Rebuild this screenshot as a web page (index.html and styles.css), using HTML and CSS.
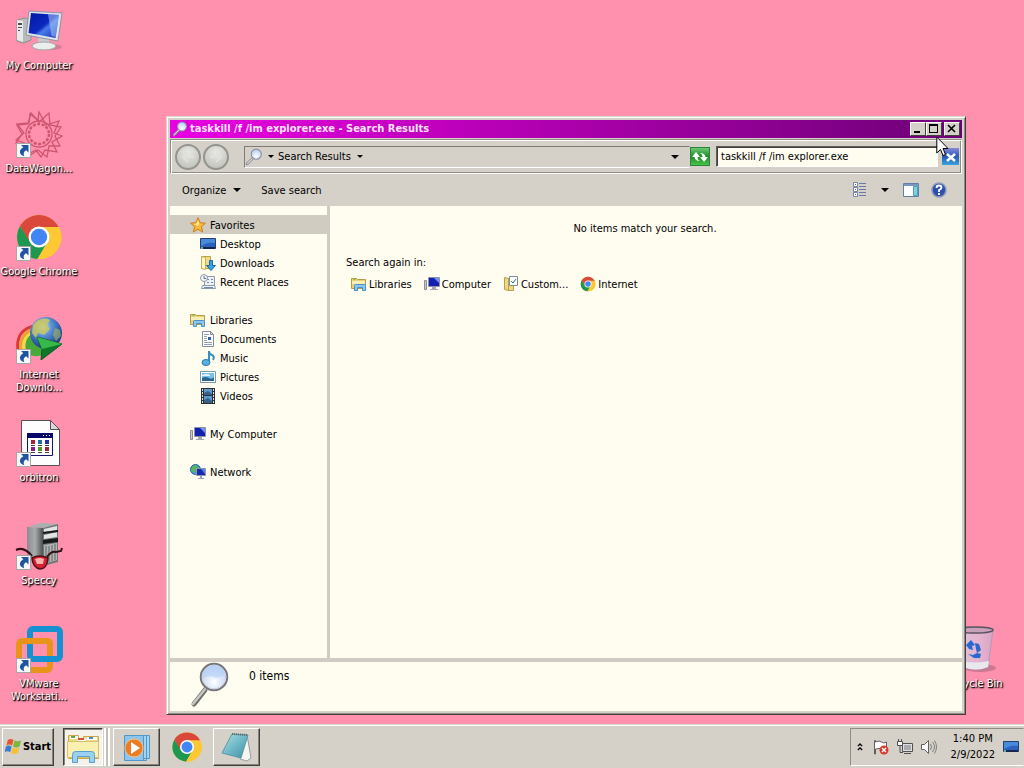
FILE: index.html
```html
<!DOCTYPE html>
<html lang="en">
<head>
    <meta charset="UTF-8">
    <meta name="viewport" content="width=device-width, initial-scale=1.0">
    <title>Search Results</title>
    <link rel="stylesheet" href="styles.css">
</head>
<body>

    <!-- shared icons -->
    <svg class="sprite" aria-hidden="true">
        <defs>
            <linearGradient id="screenBlue" x1="0" y1="0" x2="1" y2="1">
                <stop offset="0" stop-color="#0418a0"/>
                <stop offset=".5" stop-color="#0c28c0"/>
                <stop offset=".6" stop-color="#4a7ce8"/>
                <stop offset="1" stop-color="#0a28b8"/>
            </linearGradient>
            <linearGradient id="metal" x1="0" y1="0" x2="1" y2="0">
                <stop offset="0" stop-color="#888c8e"/>
                <stop offset=".5" stop-color="#a8acac"/>
                <stop offset="1" stop-color="#4c5052"/>
            </linearGradient>
            <linearGradient id="notepad" x1="0" y1="0" x2="1" y2="1">
                <stop offset="0" stop-color="#b4dfe4"/>
                <stop offset=".5" stop-color="#6fb9c6"/>
                <stop offset="1" stop-color="#3b8ea2"/>
            </linearGradient>
            <linearGradient id="binGlass" x1="0" y1="0" x2="1" y2="0">
                <stop offset="0" stop-color="#d9c6dc"/>
                <stop offset=".6" stop-color="#e6b4cf"/>
                <stop offset="1" stop-color="#d8a4c4"/>
            </linearGradient>
            <radialGradient id="globe" cx=".4" cy=".3" r=".7">
                <stop offset="0" stop-color="#cfe4f4"/>
                <stop offset=".4" stop-color="#5a92d8"/>
                <stop offset="1" stop-color="#173a80"/>
            </radialGradient>
            <radialGradient id="lens" cx=".5" cy=".7" r=".6">
                <stop offset="0" stop-color="#fff"/>
                <stop offset="1" stop-color="#bcd0f4"/>
            </radialGradient>
        </defs>

        <symbol id="i-shortcut" viewBox="0 0 15 15">
            <path fill="#f8f8f8" stroke="#a8a4a8" d="M.5.5h14v14H.5z"/>
            <path fill="#1f55a0" d="M5 2h7.500v7.500L10.200 7.300C7.800 8.500 7 10.500 8.300 13.200 3.500 12 2 7.500 7.300 4.300z"/>
        </symbol>

        <symbol id="i-chrome" viewBox="0 0 48 48">
            <circle cx="24" cy="24" r="22" fill="#fcc934"/>
            <path fill="#d9483b" d="M5 13a22 22 0 0 1 38 0l1 2H24L13.500 28z"/>
            <path fill="#1e9850" d="M5 13A22 22 0 0 0 22.500 46L33 28.500 15 29z"/>
            <path fill="#fcc934" d="M24 14h20a22 22 0 0 1-21.500 32L33 28z"/>
            <circle cx="24" cy="24" r="10.500" fill="#fff"/>
            <circle cx="24" cy="24" r="8.200" fill="#4285f4"/>
        </symbol>

        <symbol id="i-computer" viewBox="0 0 48 48">
            <ellipse cx="36" cy="40" rx="11" ry="3" fill="#b06a80" opacity=".5"/>
            <path fill="#b8bcbc" stroke="#8a9090" d="M2 13l8-2 6 2v20l-8 3-6-2z"/>
            <path fill="#e6eaea" d="M2 13l6 1v21l-6-2z"/>
            <path fill="#4a5050" d="M3 16h4v2H3zM3 20h4v1H3zM3 23h2v1H3z"/>
            <path fill="#c8cccc" d="M23 30l11 2 1 6H24z"/>
            <ellipse cx="29" cy="39" rx="12" ry="4" fill="#eceeee" stroke="#a0a4a4"/>
            <path fill="#dfe3ea" stroke="#8c94a4" d="M14 4l33 2-4 28-32-6z"/>
            <path fill="url(#screenBlue)" d="M16 6l28 2-3.500 23L13.500 26z"/>
            <path fill="#a9c8fa" opacity=".55" d="M33 7l11 1-3.500 22-4-1z"/>
        </symbol>

        <symbol id="i-pc" viewBox="0 0 16 16">
            <path fill="#c8ccd2" stroke="#8a8e98" d="M.5 4.500h2v9h-2z"/>
            <path fill="#d8d8e4" stroke="#9090a4" d="M4.500 1.500h11v9h-11z"/>
            <path fill="#1420b0" d="M5 2h10v8H5z"/>
            <path fill="#6c94f0" d="M10 2h5v5z"/>
            <path fill="#a8a8b4" d="M8 11h4v2h2v1H6v-1h2z"/>
        </symbol>

        <symbol id="i-lib" viewBox="0 0 16 16">
            <path fill="#e8d27a" stroke="#b99c40" d="M.5 12.500v-10h5l1 1h8v9z"/>
            <path fill="#f8efb8" d="M1 5h13v3H1z"/>
            <path fill="#9bc45c" d="M2 3h3v1H2z"/>
            <path fill="#8cc8ee" stroke="#4a90c8" d="M3.500 14.500v-5q0-1 1-1h9q1 0 1 1v5h-3v-3h-5v3z"/>
        </symbol>

        <symbol id="i-lens" viewBox="0 0 16 16">
            <path stroke="#8a8a94" stroke-width="2.500" stroke-linecap="round" d="M2 14l5-5"/>
            <path stroke="#d8d8de" d="M2 14l5-5"/>
            <circle cx="10" cy="5.500" r="4.500" fill="url(#lens)" stroke="#8c90a4"/>
        </symbol>

        <symbol id="i-desktop" viewBox="0 0 16 16">
            <path fill="#2b62c0" stroke="#26406c" d="M.5 2.500h15v10H.5z"/>
            <path fill="#4a8adc" d="M1 3h14v4Q8 5 1 10z"/>
            <path fill="#16264c" d="M1 11h14v2H1z"/>
            <path fill="#58b0a0" d="M1 11h2v2H1z"/>
        </symbol>
    </svg>

    <main class="desktop">

        <div class="icons">
            <a class="shortcut" href="#">
                <svg viewBox="0 0 48 48"><use href="#i-computer"/></svg>
                <span>My Computer</span>
            </a>
            <a class="shortcut" href="#">
                <svg viewBox="0 0 48 48">
                    <g fill="none" stroke="#cf5670" stroke-width="1.300">
                        <path d="M24 2l7 13 13-4-5 12 8 3-10 6 5 10-12-2-4 7-5-7-8 4-1-10-11-4 8-7-7-9 12-1 1-9 8 6z"/>
                        <path d="M16 3l8 9 10-9 1 12 11 2-6 9 5 10-11 0-2 11-9-7-9 6-2-11-11-2 6-9-5-9 11-1z"/>
                        <circle cx="24" cy="24" r="13"/>
                        <circle cx="24" cy="24" r="10" stroke-width="2.500" stroke-dasharray="3 1.500"/>
                    </g>
                    <use href="#i-shortcut" x="1" y="33" width="15" height="15"/>
                </svg>
                <span>DataWagon...</span>
            </a>
            <a class="shortcut" href="#">
                <svg viewBox="0 0 48 48">
                    <use href="#i-chrome" width="48" height="48"/>
                    <use href="#i-shortcut" x="1" y="33" width="15" height="15"/>
                </svg>
                <span>Google Chrome</span>
            </a>
            <a class="shortcut" href="#">
                <svg viewBox="0 0 48 48">
                    <g fill="none" stroke-width="3">
                        <path stroke="#d83a34" d="M20 10C8 12 1 20 3 34"/>
                        <path stroke="#f0a030" d="M20 13C10 15 4 23 6 36"/>
                        <path stroke="#e8e040" d="M20 16C12 18 7 25 9 36"/>
                    </g>
                    <path fill="#48a838" d="M19 17c-8 3-10 11-7 20 7 5 15 4 21-2l-9-7z"/>
                    <circle cx="31" cy="17" r="16" fill="url(#globe)"/>
                    <path fill="#c9c860" d="M18 9c4-6 12-8 17-5l-3 5 3 4-6 6-6-2-2 5-4-5z" opacity=".85"/>
                    <path fill="#a9b860" d="M40 12l5 2 1 6-5 5-3-6z" opacity=".6"/>
                    <path fill="#0c7828" stroke="#0a5c20" d="M22 21l25 7-21 16 1-11z"/>
                    <path fill="#38b848" d="M22 21l25 7-20 5z"/>
                    <use href="#i-shortcut" x="1" y="33" width="15" height="15"/>
                </svg>
                <span>Internet Downlo...</span>
            </a>
            <a class="shortcut" href="#">
                <svg viewBox="0 0 48 48">
                    <path fill="#fdfdfd" stroke="#5c4c54" d="M6.500 1.500h29l9 9v36h-38z"/>
                    <path fill="#d8d8d8" stroke="#5c4c54" d="M35.500 1.500v9h9z"/>
                    <path fill="#fff" stroke="#14146c" d="M12.500 14.500h25v22h-25z"/>
                    <path fill="#08086c" d="M12 14h26v5H12z"/>
                    <path fill="#fff" d="M28 16h1v1h-1zM31 16h1v1h-1zM34 16h1v1h-1z"/>
                    <path fill="#a82038" d="M16 21h4v4h-4zM30 28h4v4h-4z"/>
                    <path fill="#2070a8" d="M23 21h4v4h-4z"/>
                    <path fill="#2030b0" d="M30 21h4v4h-4z"/>
                    <path fill="#802090" d="M16 28h4v4h-4z"/>
                    <path fill="#509828" d="M23 28h4v4h-4z"/>
                    <path fill="#404040" d="M16 26h4v1h-4zM23 26h4v1h-4zM30 26h4v1h-4zM16 33h4v1h-4zM23 33h4v1h-4zM30 33h4v1h-4z"/>
                    <use href="#i-shortcut" x="1" y="33" width="15" height="15"/>
                </svg>
                <span>orbitron</span>
            </a>
            <a class="shortcut" href="#">
                <svg viewBox="0 0 48 48">
                    <path fill="#a8b0b0" d="M12 5l14-4 17 1-15 4z"/>
                    <path fill="url(#metal)" d="M12 5l16 1v38l-16-6z"/>
                    <path fill="#707877" d="M28 6l15-4v38l-15 4z"/>
                    <path fill="#e0e4e4" d="M29 7l13-3v4l-13 2zM29 13l13-3v5l-13 2z"/>
                    <path fill="#181a1a" d="M28 10l15-2v2l-15 2zM28 18l15-2v4l-15 2z"/>
                    <path fill="#b0b4b4" d="M29 23l13-2v17l-13 4z"/>
                    <path stroke="#606464" d="M31 24v17M34 24v16M37 23v16M40 22v16"/>
                    <path fill="none" stroke="#301014" stroke-width="2" d="M1 28q8-4 16 6M32 35q4-6 9-5l5-1 1-3"/>
                    <path fill="#d82030" stroke="#501018" stroke-width="1.500" d="M17 36q7-4 16 0-1 11-8 11-7-1-8-11z"/>
                    <path fill="#ffb0b0" d="M20 37q5-2 9 0l-1 5h-6z"/>
                    <use href="#i-shortcut" x="1" y="33" width="15" height="15"/>
                </svg>
                <span>Speccy</span>
            </a>
            <a class="shortcut" href="#">
                <svg viewBox="0 0 48 48">
                    <g fill="none" stroke-width="6">
                        <rect x="4" y="16" width="31" height="29" rx="3" stroke="#e8941a"/>
                        <rect x="15" y="4" width="30" height="30" rx="3" stroke="#1590d0"/>
                        <path stroke="#e8941a" d="M10 16h22q3 0 3 3v6"/>
                    </g>
                    <use href="#i-shortcut" x="1" y="33" width="15" height="15"/>
                </svg>
                <span>VMware Workstati...</span>
            </a>
        </div>

        <a class="shortcut recycle" href="#">
            <svg viewBox="0 0 48 48">
                <ellipse cx="30" cy="43" rx="16" ry="4" fill="#a86880" opacity=".6"/>
                <path fill="url(#binGlass)" stroke="#b498b4" d="M7 5h36l-5 37q-12 5-25 0z"/>
                <path fill="#e8e8ee" d="M11 36q14 3 28 0l-1 6q-12 5-25 0z"/>
                <ellipse cx="25" cy="5" rx="18" ry="3" fill="#c8a0b8" stroke="#585464" stroke-width="1.500"/>
                <path fill="#2868d0" d="M16 20l5-5 4 5-3 1 1 4-4-1zM25 18l4 1 2 6-4 3-1-4zM18 29l6 4h6l1-4-4-1-4 2z"/>
            </svg>
            <span>Recycle Bin</span>
        </a>

        <section class="window">
            <header class="titlebar">
                <svg class="icon16"><use href="#i-lens"/></svg>
                <h1>taskkill /f /im explorer.exe - Search Results</h1>
                <button class="tb" aria-label="Minimize"><svg viewBox="0 0 12 10"><path fill="#000" d="M2 7h6v2H2z"/></svg></button>
                <button class="tb" aria-label="Maximize"><svg viewBox="0 0 12 10"><path fill="#000" fill-rule="evenodd" d="M1 0h9v9H1zM2 2v6h7V2z"/></svg></button>
                <button class="tb close" aria-label="Close"><svg viewBox="0 0 12 10"><path stroke="#000" stroke-width="1.600" d="M2 1l7 7M9 1L2 8"/></svg></button>
            </header>

            <div class="addressbar">
                <button class="nav-btn" aria-label="Back"><svg viewBox="0 0 16 16"><path d="M14 8H3M8 3L3 8l5 5"/></svg></button>
                <button class="nav-btn" aria-label="Forward"><svg viewBox="0 0 16 16"><path d="M2 8h11M8 3l5 5-5 5"/></svg></button>
                <div class="crumbs">
                    <svg class="icon18"><use href="#i-lens"/></svg>
                    <button class="crumb" aria-label="Locations"><i class="caret"></i></button>
                    <button class="crumb">Search Results <i class="caret"></i></button>
                    <button class="crumb last" aria-label="Previous locations"><i class="caret big"></i></button>
                </div>
                <button class="go" aria-label="Refresh">
                    <svg viewBox="0 0 18 16">
                        <path fill="#fff" d="M1 8l4-5 4 5H6.500q0 3 2.500 4-5 0-5.500-4zM17 8l-4 5-4-5h2.500q0-3-2.500-4 5 0 5.500 4z"/>
                    </svg>
                </button>
                <input class="search" type="text" aria-label="Search" value="taskkill /f /im explorer.exe">
                <button class="clear" aria-label="Clear search">
                    <svg viewBox="0 0 16 16"><path stroke="#fff" stroke-width="2.500" d="M4 5l8 7M12 5l-8 7"/></svg>
                </button>
            </div>

            <div class="commandbar">
                <button class="cmd organize">Organize <i class="caret big"></i></button>
                <button class="cmd">Save search</button>
                <span class="spacer"></span>
                <button class="cmd" aria-label="Change view">
                    <svg class="icon16" viewBox="0 0 16 16">
                        <path fill="#fff" stroke="#7c84a4" d="M1.500.5h4v4h-4zM1.500 5.500h4v4h-4zM1.500 10.500h4v4h-4z"/>
                        <path fill="#5060a0" d="M3 2h1v1H3zM3 7h1v1H3zM3 12h1v1H3z"/>
                        <path stroke="#6878a8" d="M7 1.500h7M7 4.500h7M7 7.500h7M7 10.500h7M7 13.500h7"/>
                    </svg>
                </button>
                <button class="cmd views" aria-label="More views"><i class="caret big"></i></button>
                <button class="cmd" aria-label="Preview pane">
                    <svg class="icon16" viewBox="0 0 16 16">
                        <path fill="#fff" stroke="#6080a8" d="M.5 1.500h15v13H.5z"/>
                        <path fill="#7898c0" d="M1 2h14v2H1z"/>
                        <path fill="#80d0dc" stroke="#50a0b8" d="M10.500 4.500h4v9h-4z"/>
                    </svg>
                </button>
                <button class="cmd help" aria-label="Help">
                    <svg class="icon16" viewBox="0 0 16 16">
                        <circle cx="8" cy="8" r="7" fill="#2c50b0" stroke="#8c98b8" stroke-width="1.500"/>
                        <path fill="none" stroke="#fff" stroke-width="1.800" d="M5.500 6q0-2.500 2.500-2.500t2.500 2Q10.500 7 8 8v2"/>
                        <path fill="#fff" d="M7 11h2v2H7z"/>
                    </svg>
                </button>
            </div>

            <div class="content">
                <nav class="tree">
                    <a class="selected" href="#">
                        <svg class="icon16" viewBox="0 0 16 16"><path fill="#fcb838" stroke="#d07c18" d="M8 .8l2.200 4.900 5.200.5-4 3.500 1.300 5.300L8 12.200 3.300 15l1.300-5.300-4-3.500 5.200-.5z"/><path fill="#ffe89c" d="M8 3l1.300 3.500L8 9 4 7l2.500-.5z"/></svg>
                        <span>Favorites</span>
                    </a>
                    <a class="sub" href="#"><svg class="icon16"><use href="#i-desktop"/></svg><span>Desktop</span></a>
                    <a class="sub" href="#">
                        <svg class="icon16" viewBox="0 0 16 16">
                            <path fill="#f0dc88" stroke="#b8a048" d="M1.500 1.500h9v12h-9z"/>
                            <path fill="#fff6c4" stroke="#c8b058" d="M1.500 1.500l4 1v12l-4-1z"/>
                            <path fill="#38a4e4" stroke="#1868a8" d="M9.500 5.500h3v5h3l-4.500 5-4.500-5h3z"/>
                        </svg>
                        <span>Downloads</span>
                    </a>
                    <a class="sub" href="#">
                        <svg class="icon16" viewBox="0 0 16 16">
                            <path fill="#eef2f8" stroke="#8c98ac" d="M4.500 2.500h10v9h-10zM2.500 11.500h12l1 3h-14z"/>
                            <path stroke="#7088b0" d="M7 5.500h2M11 5.500h2M7 8.500h2M11 8.500h2M4 13.500h9"/>
                            <circle cx="4" cy="4" r="3.500" fill="#f4f6fa" stroke="#909cac"/>
                            <path fill="none" stroke="#607080" d="M4 2v2.500h2"/>
                        </svg>
                        <span>Recent Places</span>
                    </a>

                    <a class="group" href="#"><svg class="icon16"><use href="#i-lib"/></svg><span>Libraries</span></a>
                    <a class="sub" href="#">
                        <svg class="icon16" viewBox="0 0 16 16">
                            <path fill="#fff" stroke="#8490a0" d="M2.500.5h8l3 3v12h-11z"/>
                            <path fill="#dce4ec" stroke="#8490a0" d="M10.500.5v3h3z"/>
                            <path stroke="#98a0b0" d="M4 3.500h5M4 5.500h3M4 7.500h3M4 9.500h3M4 11.500h8M4 13.500h8"/>
                            <path fill="#3060b0" d="M8 6h3v3H8z"/>
                        </svg>
                        <span>Documents</span>
                    </a>
                    <a class="sub" href="#">
                        <svg class="icon16" viewBox="0 0 16 16">
                            <path fill="none" stroke="#3890c0" stroke-width="2" d="M9 13V1q0 3 3 4t1 5"/>
                            <ellipse cx="6" cy="12.500" rx="4" ry="3" fill="#58b0e0" stroke="#2878b0"/>
                        </svg>
                        <span>Music</span>
                    </a>
                    <a class="sub" href="#">
                        <svg class="icon16" viewBox="0 0 16 16">
                            <path fill="#fff" stroke="#7c98ac" d="M.5 2.500h15v11H.5z"/>
                            <path fill="#78c0ec" d="M2 4h12v8H2z"/>
                            <path fill="#e8f4fc" d="M2 6q5-2 8 0v1H2z"/>
                            <path fill="#286890" d="M2 9q4-2 7 0t5-1v4H2z"/>
                        </svg>
                        <span>Pictures</span>
                    </a>
                    <a class="sub" href="#">
                        <svg class="icon16" viewBox="0 0 16 16">
                            <path fill="#283038" d="M1 0h14v16H1z"/>
                            <path fill="#5c9cd0" d="M4 1h8v6H4zM4 8h8v7H4z"/>
                            <path fill="#386088" d="M4 5l4-2 4 3v1H4zM4 12l4-2 4 3v2H4z"/>
                            <path stroke="#e8e4d0" stroke-dasharray="2 1" d="M2.500 1v14M13.500 1v14"/>
                        </svg>
                        <span>Videos</span>
                    </a>

                    <a class="group" href="#"><svg class="icon16"><use href="#i-pc"/></svg><span>My Computer</span></a>
                    <a class="group" href="#">
                        <svg class="icon16" viewBox="0 0 16 16">
                            <circle cx="5.500" cy="5.500" r="5" fill="#4c98d0" stroke="#28609c"/>
                            <path fill="#58b858" d="M2 3l4-2 2 3-3 4-4-1z"/>
                            <path fill="#1828b0" stroke="#8c98b4" d="M6.500 4.500h9v7h-9z"/>
                            <path fill="#5880e8" d="M11 5h4v5z"/>
                            <path fill="#9ca4b0" d="M10 12h2v2h2v1H8v-1h2z"/>
                        </svg>
                        <span>Network</span>
                    </a>
                </nav>

                <div class="results">
                    <p class="empty">No items match your search.</p>
                    <p class="again">Search again in:</p>
                    <div class="places">
                        <a href="#"><svg class="icon16"><use href="#i-lib"/></svg>Libraries</a>
                        <a href="#"><svg class="icon16"><use href="#i-pc"/></svg>Computer</a>
                        <a href="#">
                            <svg class="icon16" viewBox="0 0 16 16">
                                <path fill="#ecd888" stroke="#b8a048" d="M1.500 1.500l4 1v12l-4-1zM5.500 2.500h5v12h-5z"/>
                                <path fill="#fff" stroke="#7c8c9c" d="M6.500.5h8v9h-8z"/>
                                <path fill="none" stroke="#2c80a8" d="M8 5l2 2 3-4"/>
                            </svg>
                            Custom...
                        </a>
                        <a href="#"><svg class="icon16"><use href="#i-chrome"/></svg>Internet</a>
                    </div>
                </div>
            </div>

            <footer class="details">
                <svg viewBox="0 0 48 48">
                    <path stroke="#6c6c68" stroke-width="5" stroke-linecap="round" d="M8 42l11-14"/>
                    <path stroke="#c8c8c0" stroke-width="2.500" stroke-linecap="round" d="M7 42l13-16"/>
                    <circle cx="28" cy="15" r="13" fill="url(#lens)" stroke="#74747c" stroke-width="2.500"/>
                    <circle cx="28" cy="15" r="12" fill="none" stroke="#d4d8e0"/>
                    <path fill="#b4d0f8" d="M17 16q7-3 11-1t10-2q0-10-10-10t-11 13z" opacity=".6"/>
                </svg>
                <span>0 items</span>
            </footer>
        </section>

        <svg class="cursor" viewBox="0 0 13 21"><path fill="#fff" stroke="#000" d="M.8 1v16l3.700-3.500 2.500 6 2.500-1-2.500-6H12z"/></svg>
    </main>

    <footer class="taskbar">
        <button class="start">
            <svg viewBox="0 0 18 18">
                <path fill="#e8542c" d="M3 2q3-2 6 0L7.500 8q-3-2-6 0z"/>
                <path fill="#7cb83c" d="M10 2.500q3 2 7 0L15.500 9q-4 2-7 0z"/>
                <path fill="#3c7cd0" d="M1 9q3-2 6 0L5.500 15q-3-2-6 0z"/>
                <path fill="#f8c030" d="M8 10q3 2 7 0l-1.500 6q-4 2-7 0z"/>
            </svg>
            Start
        </button>
        <div class="tasks">
            <button class="task active" aria-label="Windows Explorer">
                <svg viewBox="0 0 36 36">
                    <path fill="#f0dc84" stroke="#c8a848" d="M3.500 29.500v-23h10v3h5v-2h15v22z"/>
                    <path fill="#fff" d="M5 7h8v3H5zM13 9h8v3h-8zM22 8h10v3H22z"/>
                    <path fill="#60a840" d="M6 7h4v2H6z"/><path fill="#d85030" d="M13 9h6v2h-6z"/><path fill="#4890c0" d="M24 8h4v2h-4z"/>
                    <path fill="#faf0b0" stroke="#d8c068" d="M2.500 12.500h31v16h-31z"/>
                    <path fill="#9cd0f0" stroke="#58a0d0" d="M7.500 33.500v-8q0-3 3-3h16q3 0 3 3v8h-5v-6h-12v6z"/>
                </svg>
            </button>
            <span class="stack"></span>
            <button class="task" aria-label="Windows Media Player">
                <svg viewBox="0 0 36 36">
                    <path fill="#a4d4f0" stroke="#5098c8" d="M14.500 6.500h16v23h-16zM10.500 6.500h17v25h-17z"/>
                    <path fill="#8cc4ec" stroke="#5098c8" d="M5.500 6.500h19v25h-19z"/>
                    <circle cx="15" cy="19" r="9" fill="#ec7c20" stroke="#f8c080"/>
                    <path fill="#fff" d="M12 13l9 6-9 6z"/>
                </svg>
            </button>
            <button class="task flat" aria-label="Google Chrome"><svg><use href="#i-chrome"/></svg></button>
            <button class="task" aria-label="Notepad">
                <svg viewBox="0 0 36 36">
                    <path fill="#f4f4f0" stroke="#989c9c" d="M28 6l4 23-4 3-7-2z"/>
                    <path fill="url(#notepad)" stroke="#5c98a4" d="M13 5l16 1-7 23-19-5z"/>
                    <path fill="none" stroke="#606868" stroke-width="2" stroke-dasharray="1 1" d="M13 5l16 1"/>
                </svg>
            </button>
        </div>

        <div class="tray">
            <button class="tray-btn" aria-label="Show hidden icons"><svg class="chev" viewBox="0 0 7 10"><path fill="none" stroke="#000" stroke-width="1.500" d="M1 4l2.500-2.500L6 4M1 8.500L3.500 6 6 8.500"/></svg></button>
            <button class="tray-btn" aria-label="Action Center">
                <svg class="icon16" viewBox="0 0 16 16">
                    <path fill="#fff" stroke="#606060" d="M1.500 15V1.500h1V3q4-2 6 0t5 0v7q-3 1-5 0t-6 0v5z"/>
                    <circle cx="11" cy="11" r="4.500" fill="#d83830"/>
                    <path stroke="#fff" stroke-width="1.500" d="M9 9l4 4M13 9l-4 4"/>
                </svg>
            </button>
            <button class="tray-btn" aria-label="Network">
                <svg class="icon16" viewBox="0 0 16 16">
                    <path fill="#e0e0e0" stroke="#505050" d="M5.500 4.500h10v8h-10z"/>
                    <path fill="#a8acb0" d="M7 6h7v5H7z"/>
                    <path fill="none" stroke="#505050" d="M7 14.500h7M1.500 0v2M4.500 0v2M3 6v7.500h3"/>
                    <path fill="#fff" stroke="#505050" d="M.5 2.500h5v4h-5z"/>
                </svg>
            </button>
            <button class="tray-btn" aria-label="Volume">
                <svg class="icon16" viewBox="0 0 16 16">
                    <path fill="#fff" stroke="#606060" d="M.5 5.500h3l4-4v13l-4-4h-3z"/>
                    <path fill="none" stroke="#808080" d="M9.500 5q2 3 0 6M11.500 3q4 5 0 10M13.500 1.500q4 6.500 0 13"/>
                </svg>
            </button>
            <time class="clock" datetime="2022-02-09T13:40">1:40 PM<br>2/9/2022</time>
            <button class="tray-btn" aria-label="Show desktop"><svg class="icon16"><use href="#i-desktop"/></svg></button>
        </div>
    </footer>

</body>
</html>
```
FILE: styles.css
```css
* {
    box-sizing: border-box;
}
body {
    margin: 0;
    height: 100vh;
    display: flex;
    flex-direction: column;
    overflow: hidden;
    background-color: #ff91af;
    color: #000;
    font-family: "DejaVu Sans Condensed", "DejaVu Sans", Tahoma, sans-serif;
    font-size: 11px;
    line-height: 13px;
}
a {
    color: inherit;
    text-decoration: none;
}
button {
    margin: 0;
    padding: 0;
    border: 0;
    background: none;
    color: inherit;
    font: inherit;
    display: flex;
    align-items: center;
    justify-content: center;
}
svg {
    display: block;
    flex: none;
}
.sprite {
    position: absolute;
    width: 0;
    height: 0;
}
.icon16 {
    width: 16px;
    height: 16px;
}
.icon18 {
    width: 18px;
    height: 18px;
}
.caret {
    border: 3px solid transparent;
    border-top-color: #000;
    border-bottom: 0;
}
.caret.big {
    border-width: 4px 4px 0;
}
.spacer {
    flex: 1;
}

/* desktop */
.desktop {
    flex: 1;
    min-height: 0;
    position: relative;
}
.icons {
    padding-top: 7px;
    display: grid;
    grid-auto-rows: 103px;
    width: 78px;
}
.shortcut {
    display: flex;
    flex-direction: column;
    align-items: center;
    gap: 4px;
    width: 78px;
    color: #fff;
    text-align: center;
    text-shadow: 1px 1px 2px #000, 1px 1px 1px #000;
}
.shortcut svg {
    width: 48px;
    height: 48px;
}
.shortcut span {
    max-width: 78px;
}
.icons .shortcut:nth-child(4) span,
.icons .shortcut:nth-child(7) span {
    max-width: 64px;
}
.recycle {
    position: absolute;
    right: 11px;
    bottom: 34px;
}

/* search window */
.window {
    position: absolute;
    top: 116px;
    left: 166px;
    right: 58px;
    bottom: 9px;
    padding: 3px;
    display: flex;
    flex-direction: column;
    background-color: #d5d1c9;
    border: 1px solid;
    border-color: #dcd8d0 #404040 #404040 #dcd8d0;
    box-shadow: inset 1px 1px #fff, inset -1px -1px #908c84;
}
.titlebar {
    display: flex;
    align-items: center;
    height: 18px;
    padding: 0 2px;
    background: linear-gradient(to right, #ea00e2, #6d0076);
    color: #ffe4fc;
}
.titlebar h1 {
    flex: 1;
    margin: 0 0 0 2px;
    font-size: 11px;
    line-height: 18px;
}
.tb {
    width: 16px;
    height: 14px;
    background-color: #d5d1c9;
    border: 1px solid;
    border-color: #fff #404040 #404040 #fff;
}
.tb svg {
    width: 12px;
    height: 10px;
}
.tb.close {
    margin-left: 2px;
}
.addressbar {
    display: flex;
    align-items: center;
    height: 35px;
    margin-top: 1px;
    padding: 0 2px 0 4px;
    border: 1px solid;
    border-color: #908c84 #fff #fff #908c84;
    box-shadow: inset 1px 1px #fff, inset -1px -1px #908c84;
}
.nav-btn {
    width: 26px;
    height: 26px;
    margin-right: 2px;
    border: 2px solid #94948f;
    border-radius: 50%;
    background: radial-gradient(circle at 50% 30%, #e8e8e4, #bcbcb6);
}
.nav-btn svg {
    width: 16px;
    height: 16px;
    fill: none;
    stroke: #e0e0dc;
    stroke-width: 2px;
}
.crumbs {
    flex: 1;
    display: flex;
    align-items: center;
    height: 22px;
    margin-left: 13px;
    border: 1px solid;
    border-color: #807c74 transparent #fff #807c74;
}
.crumb {
    gap: 6px;
    margin-left: 4px;
}
.crumb:first-of-type {
    margin-left: 5px;
}
.crumb.last {
    margin-left: auto;
    margin-right: 10px;
}
.go {
    width: 20px;
    height: 19px;
    border: 1px solid #2c8438;
    background: linear-gradient(#6cc874, #1c8c28 50%, #48c448);
}
.go svg {
    width: 18px;
    height: 16px;
}
.search {
    width: 222px;
    height: 21px;
    margin: 0 4px 0 6px;
    padding: 0 4px;
    border: 1px solid;
    border-color: #605c58 #fff #fff #605c58;
    box-shadow: inset 1px 1px #404040;
    background-color: #fffcf0;
    font: inherit;
}
.clear {
    width: 17px;
    height: 17px;
    background: linear-gradient(#8888d8, #2858b8 50%, #38a4dc);
}
.clear svg {
    width: 16px;
    height: 16px;
}
.commandbar {
    display: flex;
    align-items: center;
    height: 32px;
    padding: 0 15px 0 12px;
}
.organize {
    gap: 7px;
    margin-right: 20px;
}
.views {
    margin: 0 14px 0 13px;
}
.help {
    margin-left: 12px;
}

.content {
    flex: 1;
    min-height: 0;
    display: flex;
}
.tree {
    width: 160px;
    padding-top: 9px;
    background-color: #fffcf0;
    border-right: 3px solid #d0ccc4;
}
.tree a {
    display: flex;
    align-items: center;
    gap: 4px;
    height: 19px;
    padding-left: 20px;
}
.tree span {
    padding-top: 2px;
}
.tree .sub {
    padding-left: 30px;
}
.tree .group {
    margin-top: 19px;
}
.tree .selected {
    background-color: #d0ccc2;
}
.results {
    flex: 1;
    padding: 16px 18px 0 16px;
    background-color: #fffcf0;
}
.results p {
    margin: 0;
}
.empty {
    text-align: center;
}
.results .again {
    margin-top: 21px;
}
.places {
    display: flex;
    gap: 12px;
    margin-top: 7px;
    padding-left: 5px;
}
.places a {
    display: flex;
    align-items: center;
    gap: 2px;
}
.details {
    display: flex;
    height: 53px;
    padding-left: 16px;
    background-color: #fffcf0;
    border-top: 4px solid #d0ccc4;
}
.details svg {
    width: 48px;
    height: 48px;
}
.details span {
    margin: 7px 0 0 15px;
    font-size: 12px;
    line-height: 14px;
}
.cursor {
    position: absolute;
    left: 936px;
    top: 136px;
    width: 13px;
    height: 21px;
}

/* taskbar */
.taskbar {
    display: flex;
    align-items: center;
    height: 44px;
    padding-left: 2px;
    background-color: #d5d1c9;
    border-top: 1px solid #dcd8d0;
    box-shadow: inset 0 1px #fff;
}
.start, .task {
    height: 38px;
    border: 1px solid;
    border-color: #fff #404040 #404040 #fff;
    box-shadow: inset -1px -1px #88847c;
}
.start {
    gap: 1px;
    width: 52px;
    font-weight: bold;
}
.start svg {
    width: 17px;
    height: 17px;
}
.tasks {
    flex: 1;
    display: flex;
    gap: 3px;
    margin-left: 9px;
}
.task {
    width: 47px;
}
.task svg {
    width: 36px;
    height: 36px;
}
.task.active {
    width: 40px;
    border-color: #404040 #fff #fff #404040;
    box-shadow: inset 1px 1px #88847c;
    background-color: #f4f2ea;
}
.task.flat {
    border-color: transparent;
    box-shadow: none;
}
.task.flat svg {
    width: 32px;
    height: 32px;
}
.stack {
    width: 6px;
    margin: 0 0 0 -2px;
    border: solid #fff;
    border-width: 0 2px;
    background-color: #c4c0b8;
}
.tray {
    display: flex;
    align-items: center;
    height: 38px;
    padding: 0 4px 0 6px;
    border: 1px solid;
    border-color: #908c84 transparent #fff #908c84;
}
.tray-btn {
    margin-right: 8px;
}
.tray-btn:first-child {
    margin-right: 10px;
}
.tray-btn:last-child {
    margin-right: 0;
}
.chev {
    width: 6px;
    height: 10px;
}
.clock {
    margin: 0 8px 0 6px;
    text-align: center;
    line-height: 16px;
}
```
